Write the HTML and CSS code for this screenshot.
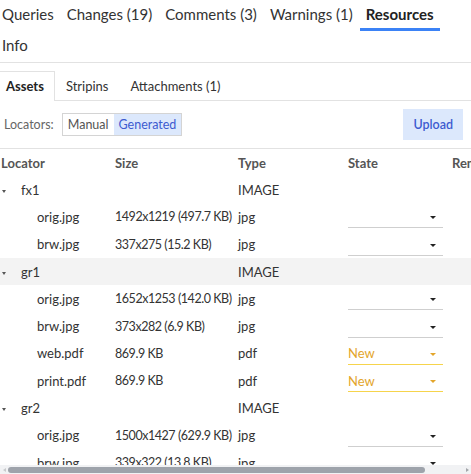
FILE: index.html
```html
<!DOCTYPE html>
<html lang="en">
<head>
    <meta charset="UTF-8">
    <title>Resources</title>
    <link rel="stylesheet" href="styles.css">
</head>
<body>
    <div class="page">
        <nav class="main-tabs">
            <a href="#" class="tab">Queries</a>
            <a href="#" class="tab">Changes (19)</a>
            <a href="#" class="tab">Comments (3)</a>
            <a href="#" class="tab">Warnings (1)</a>
            <a href="#" class="tab active">Resources</a>
            <a href="#" class="tab">Info</a>
        </nav>

        <div class="sub-tabs">
            <a href="#" class="sub-tab active">Assets</a>
            <a href="#" class="sub-tab">Stripins</a>
            <a href="#" class="sub-tab">Attachments (1)</a>
        </div>

        <div class="toolbar">
            <div class="locators">
                <span class="label">Locators:</span>
                <div class="toggle">
                    <button class="toggle-btn">Manual</button>
                    <button class="toggle-btn selected">Generated</button>
                </div>
            </div>
            <button class="upload-btn">Upload</button>
        </div>

        <div class="table-wrap">
            <table class="asset-table">
                <colgroup>
                    <col class="col-locator">
                    <col class="col-size">
                    <col class="col-type">
                    <col class="col-state">
                    <col class="col-remarks">
                </colgroup>
                <thead>
                    <tr>
                        <th>Locator</th>
                        <th>Size</th>
                        <th>Type</th>
                        <th>State</th>
                        <th>Remarks</th>
                    </tr>
                </thead>
                <tbody id="assetBody">
                    <!-- rows rendered below -->
                </tbody>
            </table>
        </div>

        <div class="h-scroll">
            <span class="arrow left"></span>
            <div class="track"><div class="thumb"></div></div>
            <span class="arrow right"></span>
        </div>
    </div>

    <script>
        const groups = [
            { name: 'fx1', files: [
                { name: 'orig.jpg', size: '1492x1219 (497.7 KB)', type: 'jpg', state: '' },
                { name: 'brw.jpg', size: '337x275 (15.2 KB)', type: 'jpg', state: '' }
            ] },
            { name: 'gr1', hover: true, files: [
                { name: 'orig.jpg', size: '1652x1253 (142.0 KB)', type: 'jpg', state: '' },
                { name: 'brw.jpg', size: '373x282 (6.9 KB)', type: 'jpg', state: '' },
                { name: 'web.pdf', size: '869.9 KB', type: 'pdf', state: 'New' },
                { name: 'print.pdf', size: '869.9 KB', type: 'pdf', state: 'New' }
            ] },
            { name: 'gr2', files: [
                { name: 'orig.jpg', size: '1500x1427 (629.9 KB)', type: 'jpg', state: '' },
                { name: 'brw.jpg', size: '339x322 (13.8 KB)', type: 'jpg', state: '' }
            ] }
        ];

        function renderAssets() {
            const body = document.getElementById('assetBody');
            let html = '';

            groups.forEach(group => {
                html += `
                    <tr class="group-row${group.hover ? ' hover' : ''}">
                        <td><span class="caret"></span><span class="group-name">${group.name}</span></td>
                        <td></td>
                        <td>IMAGE</td>
                        <td></td>
                        <td></td>
                    </tr>`;

                group.files.forEach(file => {
                    html += `
                        <tr>
                            <td class="file-name">${file.name}</td>
                            <td class="size">${file.size}</td>
                            <td>${file.type}</td>
                            <td>
                                <div class="state-select${file.state ? ' is-new' : ''}">
                                    <span>${file.state}</span>
                                    <span class="select-caret"></span>
                                </div>
                            </td>
                            <td></td>
                        </tr>`;
                });
            });

            body.innerHTML = html;
        }

        renderAssets();
    </script>
</body>
</html>
```

FILE: styles.css
```css
:root {
    --text-color: #333;
    --muted-color: #555;
    --line-color: #e2e2e2;
    --accent: #3b82f6;
    --accent-bg: #dce8fc;
    --accent-text: #3d5bd0;
    --warn-color: #e3a52b;
    --warn-line: #f6d44c;
}

* {
    margin: 0;
    padding: 0;
    box-sizing: border-box;
}

body {
    font-family: Lato, "Open Sans", sans-serif;
    color: var(--text-color);
    background: #fff;
    overflow: hidden;
}

a {
    color: inherit;
    text-decoration: none;
}

button {
    font-family: inherit;
    border: none;
    background: none;
    cursor: pointer;
}

.page {
    height: 474px;
    display: flex;
    flex-direction: column;
}

/* Top level tabs */
.main-tabs {
    display: flex;
    flex-wrap: wrap;
    margin-left: -4px;
    border-bottom: 1px solid var(--line-color);
    font-size: 15px;
}

.tab {
    padding: 4px 6px 4px;
    margin-right: 1px;
    line-height: 20px;
    border-bottom: 3px solid transparent;
    color: #333;
}

.tab.active {
    font-weight: bold;
    color: #222;
    border-bottom-color: var(--accent);
}

/* Asset tabs */
.sub-tabs {
    display: flex;
    margin: 8px 0 0 -5px;
    border-bottom: 1px solid var(--line-color);
    font-size: 13px;
}

.sub-tab {
    padding: 0 10px;
    line-height: 29px;
    border: 1px solid transparent;
    border-bottom: none;
    margin-bottom: -1px;
    color: #333;
}

.sub-tab.active {
    font-weight: bold;
    color: #222;
    background: #fff;
    border-color: var(--line-color);
    height: 30px;
}

/* Locators + upload */
.toolbar {
    display: flex;
    justify-content: space-between;
    align-items: center;
    padding: 0 8px 0 4px;
    margin-top: 8px;
    height: 31px;
    font-size: 12.5px;
}

.locators {
    display: flex;
    align-items: center;
    gap: 8px;
}

.label {
    color: #666;
}

.toggle {
    display: flex;
    border: 1px solid #d4d4d4;
    height: 23px;
}

.toggle-btn {
    font-size: 12.5px;
    padding: 0 5px;
    color: var(--muted-color);
}

.toggle-btn.selected {
    background: var(--accent-bg);
    color: var(--accent-text);
}

.upload-btn {
    height: 31px;
    padding: 0 10px;
    font-size: 12.5px;
    font-weight: 600;
    background: var(--accent-bg);
    color: var(--accent-text);
}

/* Table */
.table-wrap {
    flex: 1;
    overflow: hidden;
    margin-top: 8px;
    border-top: 1px solid var(--line-color);
}

.asset-table {
    border-collapse: collapse;
    table-layout: fixed;
    width: 640px;
    font-size: 13px;
}

.col-locator { width: 115px; }
.col-size { width: 123px; }
.col-type { width: 110px; }
.col-state { width: 104px; }
.col-remarks { width: 188px; }

.asset-table th {
    text-align: left;
    font-weight: bold;
    color: var(--muted-color);
    height: 27px;
    white-space: nowrap;
}

.asset-table td {
    height: 27.3px;
    padding: 0;
    white-space: nowrap;
    vertical-align: middle;
}

.asset-table th:first-child {
    padding-left: 1px;
}

.asset-table tr.hover td {
    background: #f3f3f3;
}

/* numbers run wide in this face, pull them in a little */
.asset-table td.size {
    font-size: 12.5px;
    letter-spacing: -0.45px;
}

.caret {
    display: inline-block;
    vertical-align: middle;
    border-left: 2.5px solid transparent;
    border-right: 2.5px solid transparent;
    border-top: 3px solid var(--muted-color);
    margin: 0 15px 0 2px;
}

.asset-table td.file-name {
    padding-left: 37px;
}

.state-select {
    display: flex;
    justify-content: space-between;
    align-items: center;
    width: 95px;
    height: 22px;
    margin-top: 1px;
    padding-right: 7px;
    border-bottom: 1px solid #cfcfcf;
}

.select-caret {
    border-left: 3px solid transparent;
    border-right: 3px solid transparent;
    border-top: 3px solid #222;
    margin-top: 2px;
}

.state-select.is-new {
    color: var(--warn-color);
    border-bottom: 1px solid var(--warn-line);
}

.state-select.is-new .select-caret {
    border-top-color: var(--warn-color);
}

/* Horizontal scroll bar */
.h-scroll {
    display: flex;
    align-items: center;
    height: 9px;
    background: #f1f2f4;
}

.arrow {
    width: 8px;
    display: flex;
    justify-content: center;
}

.arrow.left::before {
    content: "";
    border-top: 2.5px solid transparent;
    border-bottom: 2.5px solid transparent;
    border-right: 3px solid #c8cacd;
}

.arrow.right::before {
    content: "";
    border-top: 2.5px solid transparent;
    border-bottom: 2.5px solid transparent;
    border-left: 3px solid #a3a6ab;
}

.track {
    flex: 1;
    padding-right: 30px;
}

.thumb {
    width: 417px;
    height: 6px;
    border-radius: 3px;
    background: #9ea3ab;
}
```
